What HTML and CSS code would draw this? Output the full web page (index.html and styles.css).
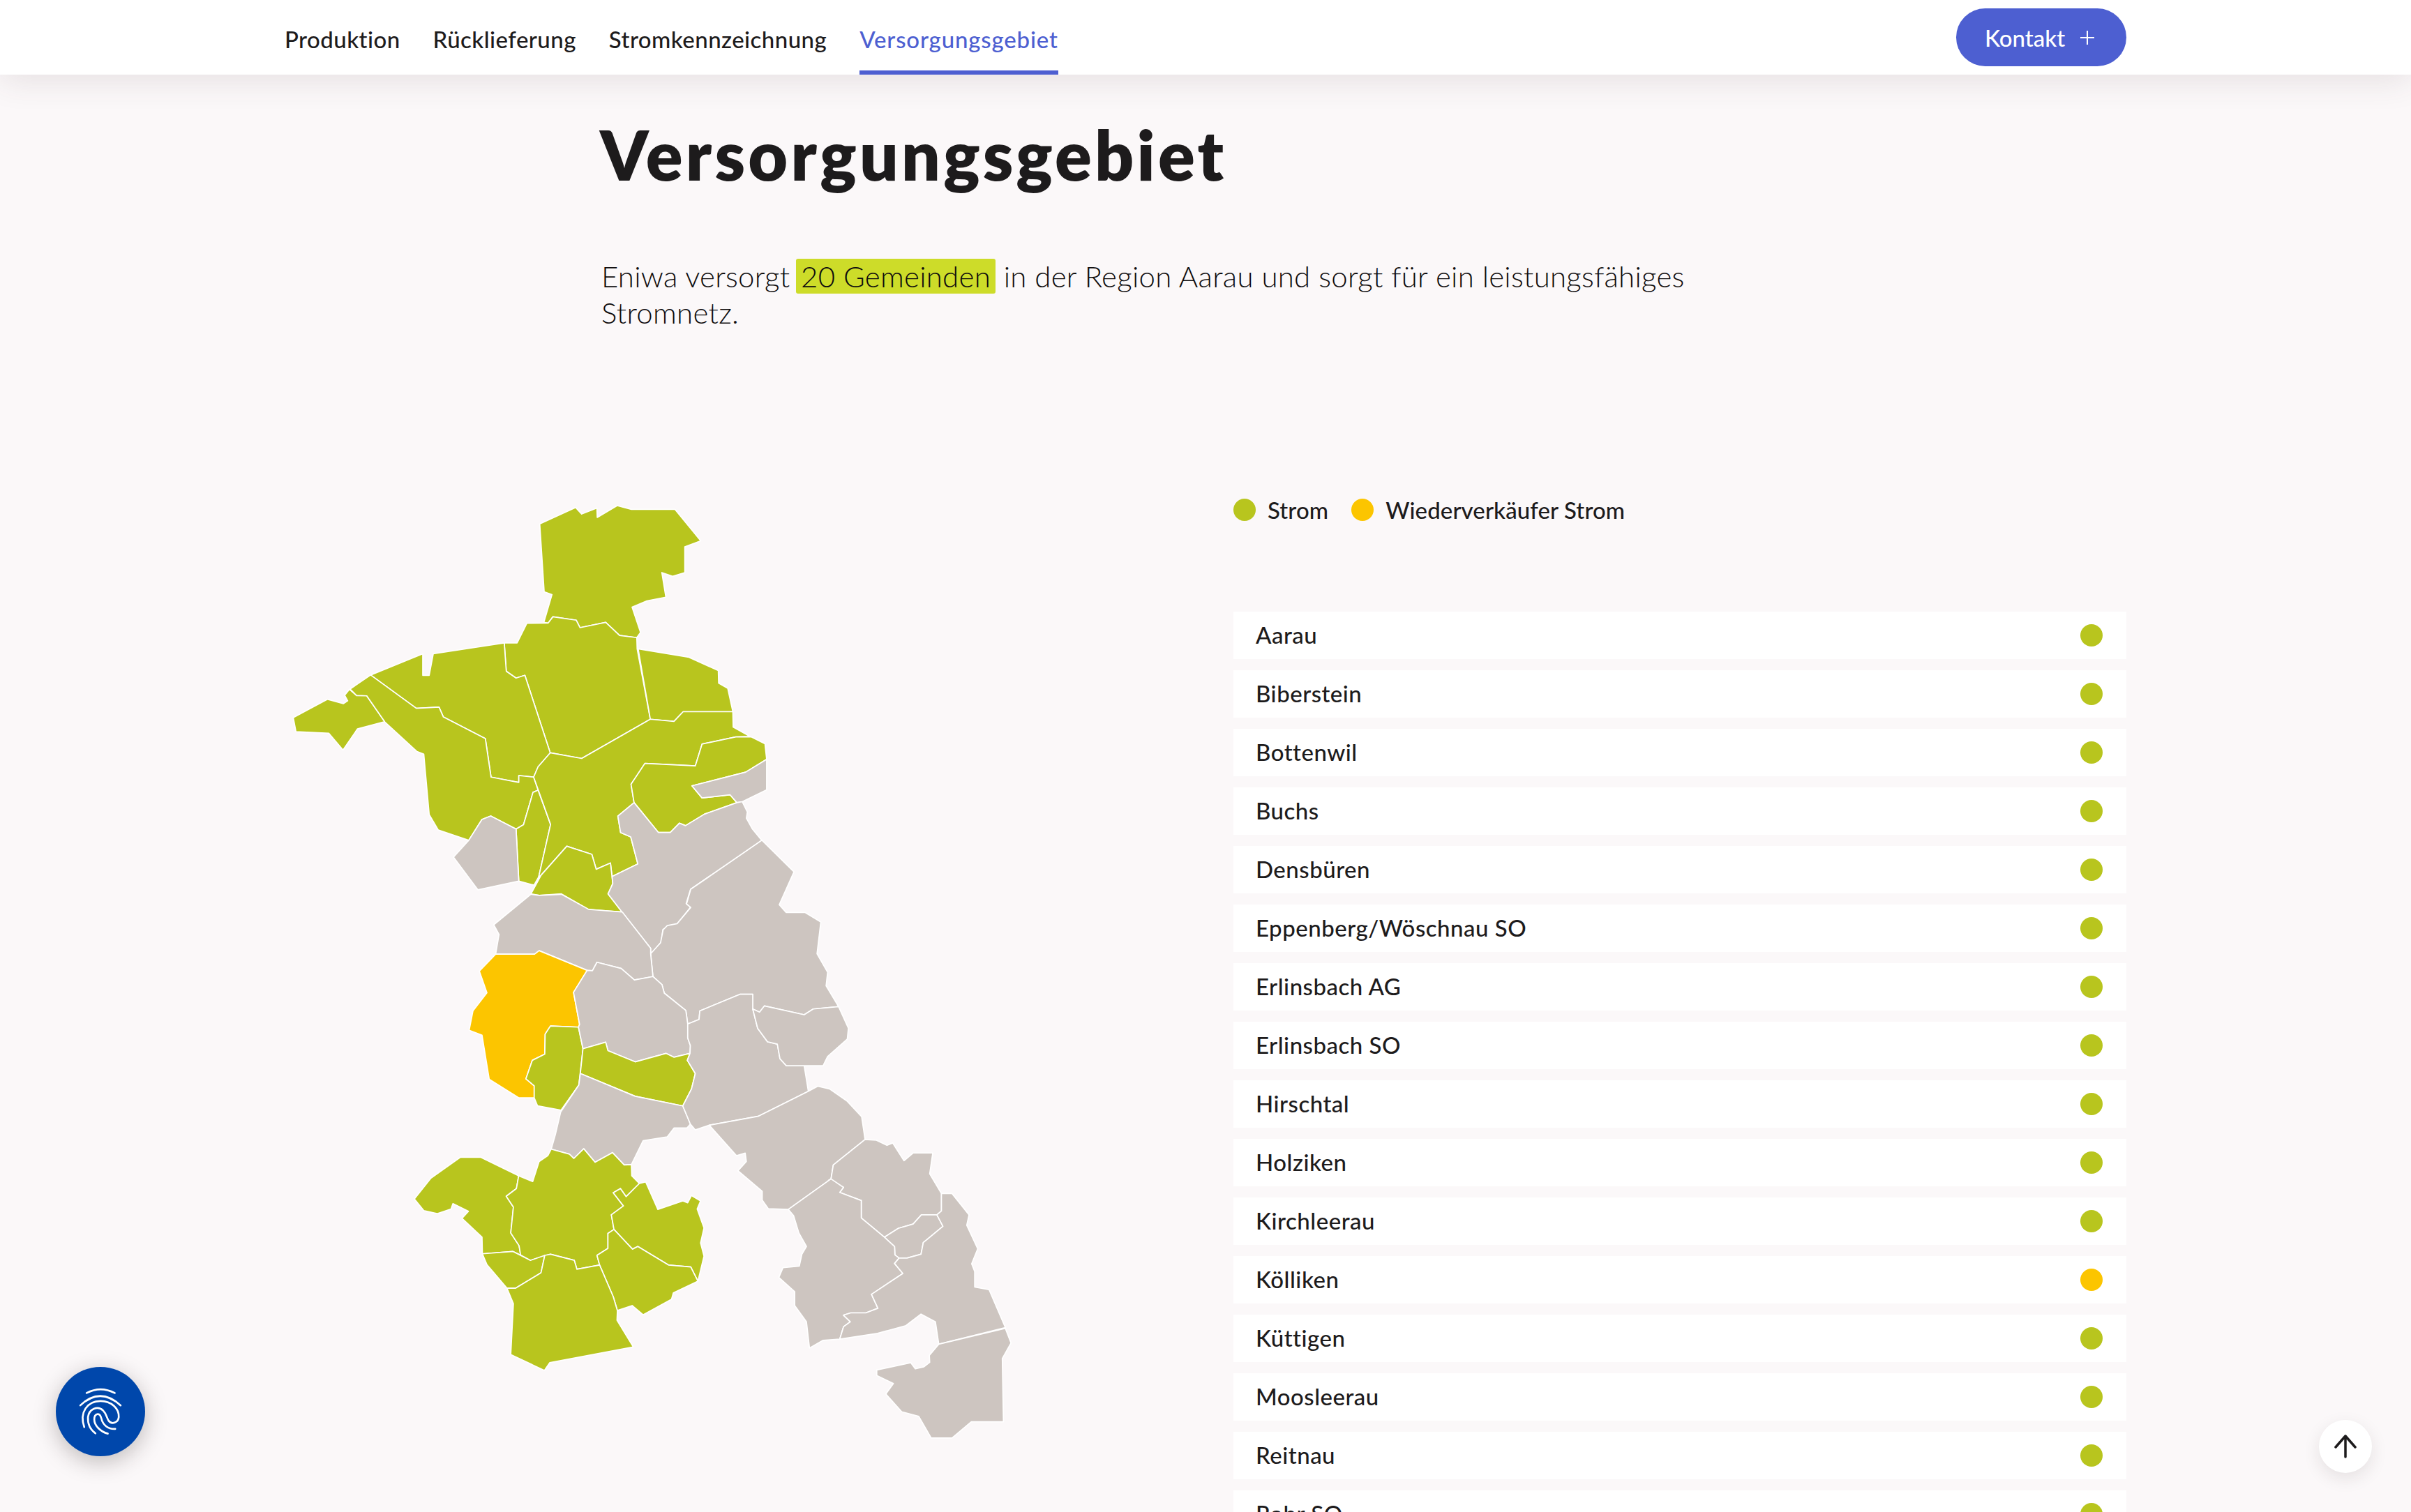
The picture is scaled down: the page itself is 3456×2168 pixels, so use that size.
FILE: index.html
```
<!DOCTYPE html>
<html lang="de">
<head>
<meta charset="utf-8">
<title>Versorgungsgebiet</title>
<link rel="stylesheet" href="styles.css">
</head>
<body>
<header class="nav">
  <div class="nav-inner">
    <nav class="nav-links">
      <a class="nav-link">Produktion</a>
      <a class="nav-link">Rücklieferung</a>
      <a class="nav-link">Stromkennzeichnung</a>
      <a class="nav-link active">Versorgungsgebiet</a>
    </nav>
    <a class="contact">Kontakt
      <svg class="plus" viewBox="0 0 20 20"><path d="M10 0V20M0 10H20"/></svg>
    </a>
  </div>
</header>
<main class="page">
  <section class="hero">
    <h1 class="title">Versorgungsgebiet</h1>
    <p class="lead">Eniwa versorgt <mark class="hl">20 Gemeinden</mark> in der Region Aarau und sorgt für ein leistungsfähiges Stromnetz.</p>
  </section>
  <section class="area">
    <svg class="map" viewBox="408 700 1360 1500" width="1360" height="1500">
      <g class="z2" transform="translate(400 700) scale(0.4847 0.4464)">
        <polygon class="g" points="771,115 877,62 895,83 940,64 941,94 1000,56 1042,68 1171,68 1247,169 1200,188 1200,271 1164,283 1132,271 1144,350 1088,362 1044,382 1069,463 1058,480 1007,473 966,431 890,448 879,424 810,413 796,433 783,431 807,342 784,333"/>
        <polygon class="g" points="733,434 796,433 810,413 879,424 890,448 966,431 1007,473 1058,480 1059,516 1098,742 895,868 802,850 727,601 701,610 672,588 666,497 704,497"/>
        <polygon class="g" points="1062,516 1212,543 1299,586 1300,626 1327,643 1342,718 1195,718 1168,749 1098,742"/>
        <polygon class="g" points="271,600 425,532 425,601 444,601 456,532 666,497 672,588 701,610 727,601 802,850 766,895 753,928 709,923 709,945 627,928 610,804 486,735 473,703 406,707"/>
        <polygon class="g" points="210,645 271,600 406,707 473,703 486,735 610,804 627,928 709,945 709,923 753,928 766,970 751,977 723,1081 701,1095 626,1053 600,1064 561,1131 471,1098 444,1048 428,854 408,846 312,750 259,667 229,666"/>
        <polygon class="g" points="42,737 143,678 190,692 203,683 194,665 208,646 229,666 259,667 312,750 232,773 189,841 147,787 50,782"/>
        <polygon class="g" points="701,1095 723,1081 751,977 766,970 803,1080 768,1248 754,1275 709,1262"/>
        <polygon class="g" points="802,850 895,868 1098,742 1168,749 1195,718 1342,718 1343,767 1392,797 1351,799 1251,822 1231,892 1082,884 1041,951 1050,1010 1002,1053 1010,1106 1040,1120 1061,1207 985,1247 980,1204 938,1224 925,1176 851,1150 775,1243 768,1248 803,1080 753,928 766,895"/>
        <polygon class="g" points="1082,884 1231,892 1251,822 1351,799 1397,799 1437,821 1442,871 1380,912 1221,956 1251,995 1334,985 1354,1010 1258,1047 1202,1084 1184,1076 1157,1106 1122,1106 1050,1010 1041,951"/>
        <polygon class="g" points="851,1150 925,1176 938,1224 980,1204 987,1270 973,1303 1014,1361 915,1353 835,1303 770,1308 745,1303 775,1243"/>
        <polygon class="s" points="516,1185 561,1131 600,1064 626,1053 701,1095 709,1262 588,1290"/>
        <polygon class="s" points="1221,956 1380,912 1442,871 1442,969 1370,1007 1354,1010 1334,985 1251,995"/>
        <polygon class="s" points="1050,1010 1122,1106 1157,1106 1184,1076 1202,1084 1258,1047 1354,1010 1370,1007 1385,1040 1382,1060 1400,1095 1428,1132 1217,1288 1204,1334 1217,1346 1177,1400 1150,1406 1135,1418 1130,1458 1099,1497 1099,1478 1014,1361 973,1303 987,1270 985,1247 1061,1207 1040,1120 1010,1106 1002,1053"/>
      </g>
      <g class="z3" transform="translate(640 1300) scale(0.542 0.5537)">
        <polygon class="s" points="834,-172 919,-90 880,-5 898,15 948,15 990,40 980,122 1008,170 1004,205 1037,259 970,265 946,280 841,257 828,273 810,265 810,227 776,227 670,270 668,292 638,304 633,269 576,224 570,202 546,181 540,122 566,94 573,60 584,49 610,44 646,2 635,-7 646,-45"/>
        <polygon class="s" points="223,-32 245,-29 304,-32 376,7 465,14 540,108 540,122 546,181 497,190 462,160 398,144 386,166 372,165 245,114 233,123 130,123 139,72 125,47"/>
        <polygon class="y" points="130,123 233,123 245,114 372,165 336,222 352,305 349,312 275,309 261,330 260,382 227,398 210,446 232,464 232,495 191,495 113,447 94,333 60,320 70,270 107,223 87,167"/>
        <polygon class="g" points="275,309 349,312 361,368 350,462 303,527 241,516 232,495 232,464 210,446 227,398 260,382 261,330"/>
        <polygon class="s" points="372,165 386,166 398,144 462,160 497,190 546,181 570,202 576,224 633,269 638,304 638,340 645,360 644,380 602,390 581,380 499,402 427,373 421,351 361,368 349,312 352,305 336,222"/>
        <polygon class="g" points="361,368 421,351 427,373 499,402 581,380 602,390 644,380 637,398 658,432 648,472 625,516 499,491 354,432"/>
        <polygon class="s" points="354,432 499,491 625,516 645,563 636,573 602,573 584,596 520,606 489,668 470,669 439,637 393,662 363,627 337,652 325,641 277,628 288,590 302,532 350,462"/>
        <polygon class="s" points="670,270 776,227 810,227 810,265 823,315 849,350 875,356 882,394 899,412 946,412 957,478 824,543 695,566 658,578 645,563 625,516 648,472 658,432 637,398 644,380 645,360 638,340 638,304 668,292"/>
        <polygon class="s" points="810,265 828,273 841,257 946,280 970,265 1037,259 1063,315 1060,343 1008,388 996,412 899,412 882,394 875,356 849,350 823,315"/>
        <polygon class="s" points="695,566 824,543 957,478 982,465 1013,472 1060,504 1098,544 1107,603 1023,669 1017,705 904,784 851,782 835,760 835,737 771,684 793,660 790,638 767,645"/>
        <polygon class="s" points="1107,603 1137,605 1165,618 1180,612 1210,658 1234,638 1286,638 1278,692 1309,743 1309,788 1297,798 1256,798 1234,822 1195,833 1158,856 1097,806 1097,761 1040,740 1050,727 1010,709 1017,705 1023,669"/>
        <polygon class="s" points="1158,856 1195,833 1234,822 1256,798 1297,798 1313,828 1261,870 1255,900 1218,910 1197,910 1186,902 1185,880"/>
        <polygon class="s" points="904,784 1017,705 1050,727 1040,740 1097,761 1097,806 1158,856 1185,880 1186,902 1197,910 1185,924 1207,950 1124,1004 1141,1040 1109,1052 1069,1052 1050,1058 1068,1075 1050,1088 1040,1120 996,1123 960,1143 952,1075 921,1033 921,997 879,960 890,935 933,931 940,900 952,880 932,845 918,800"/>
        <polygon class="s" points="1309,743 1337,743 1382,798 1376,825 1405,886 1389,925 1397,945 1397,985 1435,992 1478,1090 1302,1133 1293,1075 1255,1055 1215,1085 1140,1105 1040,1120 1050,1088 1068,1075 1050,1058 1069,1052 1109,1052 1141,1040 1124,1004 1207,950 1185,924 1197,910 1218,910 1255,900 1261,870 1313,828 1297,798 1309,788"/>
        <polygon class="s" points="1302,1133 1478,1092 1493,1130 1470,1170 1473,1334 1388,1334 1337,1376 1282,1376 1249,1320 1204,1308 1162,1262 1182,1235 1138,1214 1138,1200 1228,1181 1240,1197 1262,1192 1278,1180 1277,1162"/>
        <polygon class="g" points="37,649 90,649 191,697 185,730 158,750 177,778 170,845 192,878 196,902 176,893 95,899 94,856 41,807 58,789 17,769 12,783 -25,795 -60,787 -85,757 -41,703"/>
        <polygon class="g" points="277,628 325,641 337,652 363,627 393,662 439,637 470,669 489,668 490,697 510,717 475,751 460,730 441,741 468,775 436,798 443,836 427,846 427,885 398,903 405,928 345,939 338,916 275,900 222,916 196,902 192,878 170,845 177,778 158,750 185,730 191,697 228,712 245,660 268,645"/>
        <polygon class="g" points="527,713 559,784 625,762 638,767 648,748 672,762 663,783 681,832 672,871 681,905 665,970 646,933 587,928 506,880 492,887 443,836 436,798 468,775 441,741 460,730 475,751 510,717"/>
        <polygon class="g" points="443,836 492,887 506,880 587,928 646,933 665,970 600,1000 595,1017 520,1057 491,1033 452,1046 441,1010 405,928 398,903 427,885 427,846"/>
        <polygon class="g" points="95,899 176,893 222,916 260,903 250,948 183,988 160,988 107,927"/>
        <polygon class="g" points="160,988 183,988 250,948 260,903 275,900 338,916 345,939 405,928 441,1010 452,1046 451,1071 494,1140 273,1181 259,1201 170,1160 177,1028"/>
      </g>
    </svg>
    <div class="side">
      <div class="legend">
        <span class="legend-item"><i class="dot green"></i>Strom</span>
        <span class="legend-item"><i class="dot yellow"></i>Wiederverkäufer Strom</span>
      </div>
      <ul class="towns">
        <li class="town">Aarau<i class="dot green"></i></li>
        <li class="town">Biberstein<i class="dot green"></i></li>
        <li class="town">Bottenwil<i class="dot green"></i></li>
        <li class="town">Buchs<i class="dot green"></i></li>
        <li class="town">Densbüren<i class="dot green"></i></li>
        <li class="town">Eppenberg/Wöschnau SO<i class="dot green"></i></li>
        <li class="town">Erlinsbach AG<i class="dot green"></i></li>
        <li class="town">Erlinsbach SO<i class="dot green"></i></li>
        <li class="town">Hirschtal<i class="dot green"></i></li>
        <li class="town">Holziken<i class="dot green"></i></li>
        <li class="town">Kirchleerau<i class="dot green"></i></li>
        <li class="town">Kölliken<i class="dot yellow"></i></li>
        <li class="town">Küttigen<i class="dot green"></i></li>
        <li class="town">Moosleerau<i class="dot green"></i></li>
        <li class="town">Reitnau<i class="dot green"></i></li>
        <li class="town">Rohr SO<i class="dot green"></i></li>
      </ul>
    </div>
  </section>
</main>
<button class="fab" type="button" aria-label="Datenschutz">
  <svg viewBox="120 120 383 383" width="128" height="128"><path d="M252 232Q312 200 373 232M225 285Q310 205 398 285M242 378C220 315 255 266 312 266C360 266 392 300 390 335C388 358 360 370 346 350C338 338 338 322 322 306C300 285 262 300 258 335C256 365 270 390 290 405M343 406C310 398 285 370 285 345C285 320 308 312 315 340C322 370 345 388 375 386"/></svg>
</button>
<button class="up" type="button" aria-label="Nach oben">
  <svg viewBox="0 0 32 34" width="32" height="34"><path d="M16 2V32M2 18L16 2L30 18"/></svg>
</button>
</body>
</html>
```
FILE: styles.css
```
* { box-sizing: border-box; }
html, body { margin: 0; height: 2168px; overflow: hidden; }
body {
  background: #fbf8f9;
  color: #1d1b1c;
  font-family: "Lato", "Liberation Sans", sans-serif;
}
.nav {
  position: relative;
  z-index: 2;
  height: 107px;
  background: #fff;
  box-shadow: 0 8px 48px rgba(70, 50, 60, 0.12);
}
.nav-inner {
  width: 2640px;
  height: 100%;
  margin: 0 auto;
  display: flex;
  justify-content: space-between;
  align-items: flex-start;
}
.nav-links { display: flex; gap: 47px; height: 100%; }
.nav-link {
  display: flex;
  align-items: center;
  height: 100%;
  padding-top: 11px;
  font-size: 33px;
  font-weight: 500;
  letter-spacing: 0.45px;
  border-bottom: 6px solid transparent;
}
.nav-link.active { color: #4d5fd1; border-bottom-color: #4d5fd1; letter-spacing: 0.85px; }
.contact {
  margin-top: 12px;
  width: 244px;
  height: 83px;
  padding-left: 41px;
  display: flex;
  align-items: center;
  gap: 22px;
  border-radius: 42px;
  background: #4d5fd1;
  color: #fff;
  font-size: 33px;
  font-weight: 500;
}
.plus { width: 20px; height: 20px; fill: none; stroke: #fff; stroke-width: 2; }
.page { width: 2640px; margin: 0 auto; }
.hero { padding: 54px 0 0 452px; }
.title { margin: 0; font-size: 98px; line-height: 120px; font-weight: 800; letter-spacing: 4.25px; }
.lead {
  margin: 89px 0 0 2px;
  width: 1640px;
  font-size: 42px;
  line-height: 52px;
  font-weight: 300;
  letter-spacing: 0.25px;
  color: #0f0d0e;
}
.hl { background: #cddc29; color: inherit; border-radius: 3px; padding: 0 7px; margin-left: -3px; }
.area {
  margin-top: 226px;
  display: grid;
  grid-template-columns: 1360px 1280px;
  align-items: start;
}
.map { display: block; }
.map polygon { stroke: #fff; stroke-width: 1.7; stroke-linejoin: round; vector-effect: non-scaling-stroke; }
.g { fill: #b8c51e; }
.s { fill: #cdc5c0; }
.y { fill: #fcc500; }
.side { padding-top: 15px; }
.legend { display: flex; gap: 33px; height: 32px; }
.legend-item { display: flex; align-items: center; gap: 17px; font-size: 33px; font-weight: 500; letter-spacing: 0.1px; }
.dot { display: block; width: 32px; height: 32px; border-radius: 50%; flex: none; }
.dot.green { background: #b8c51e; }
.dot.yellow { background: #fcc500; }
.towns { list-style: none; margin: 130px 0 0; padding: 0; display: flex; flex-direction: column; gap: 16px; }
.town {
  height: 68px;
  padding: 0 34px 2px 32px;
  display: flex;
  align-items: center;
  justify-content: space-between;
  background: #fff;
  font-size: 33px;
  font-weight: 500;
  letter-spacing: 0.5px;
}
.town .dot { margin-top: 2px; }
.fab, .up { position: fixed; border: 0; padding: 0; border-radius: 50%; display: flex; align-items: center; justify-content: center; }
.fab { left: 80px; top: 1960px; width: 128px; height: 128px; background: #0047ab; box-shadow: 0 8px 32px rgba(40, 30, 30, 0.28); }
.fab path { fill: none; stroke: #fff; stroke-width: 8; stroke-linecap: round; }
.up { left: 3324px; top: 2036px; width: 76px; height: 76px; background: #fff; box-shadow: 0 8px 24px rgba(40, 30, 30, 0.1); }
.up path { fill: none; stroke: #1d1b1c; stroke-width: 3.5; stroke-linecap: round; stroke-linejoin: round; }
```
